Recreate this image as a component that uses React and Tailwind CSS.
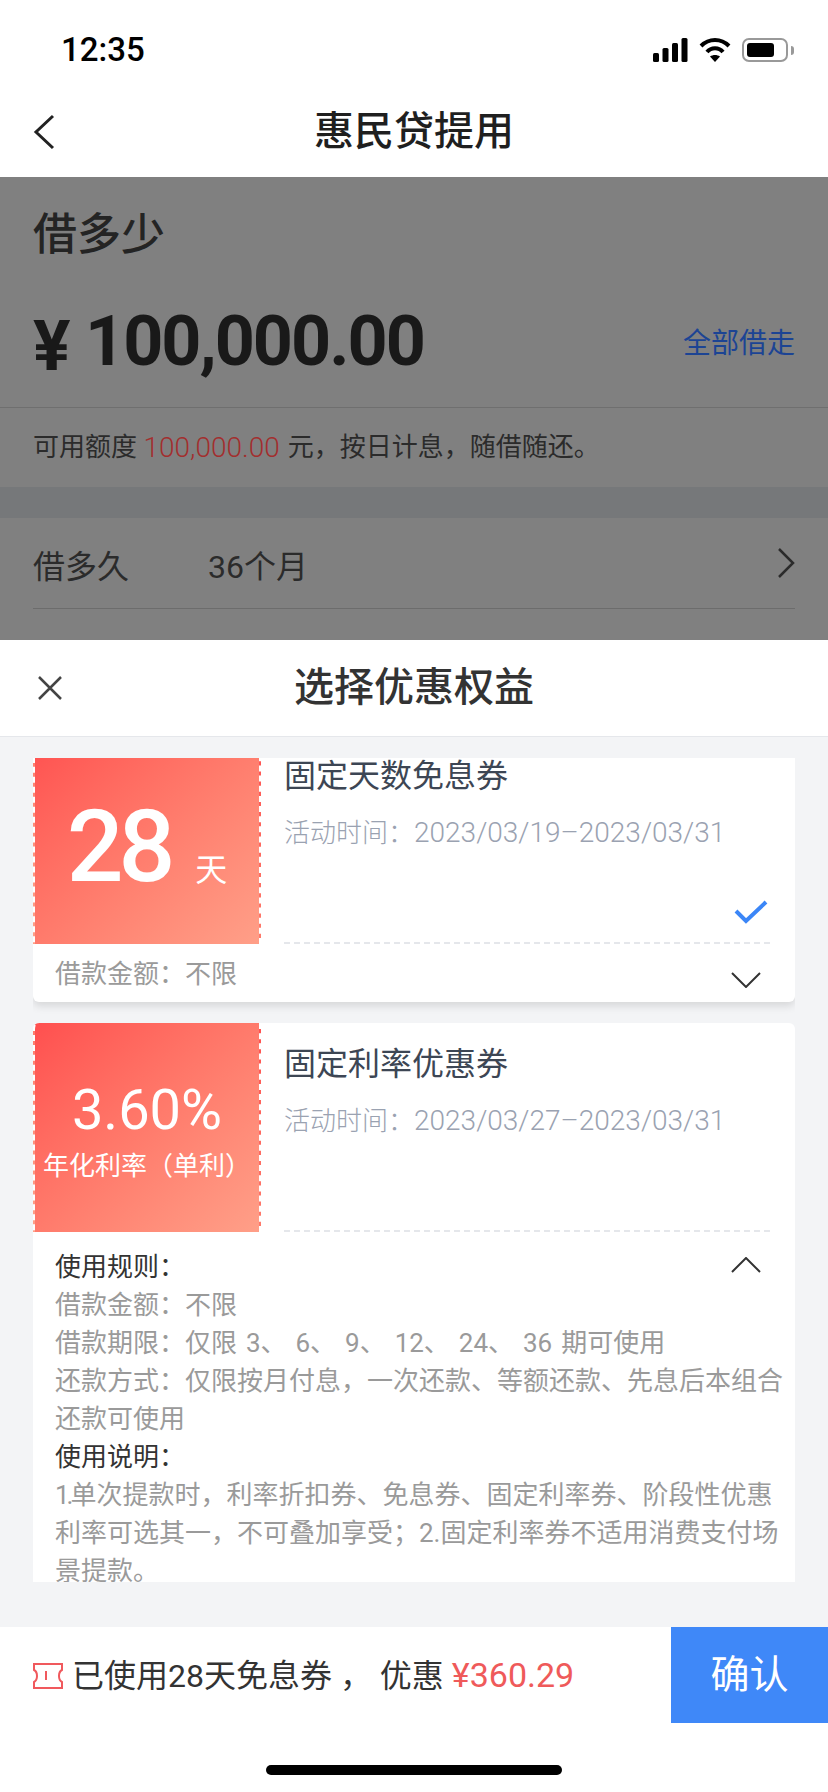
import React from "react";

const sans = "font-['Roboto','Noto_Sans_CJK_SC',sans-serif]";

const Chevron = ({ up, className }) => (
    <svg width="30" height="16" viewBox="0 0 30 16" fill="none" stroke="#333" strokeWidth="2" className={`mr-[22px] shrink-0 ${className}`}>
        <path d={up ? "M1 15 L15 1 L29 15" : "M1 1 L15 15 L29 1"} />
    </svg>
);

const Coupon = ({ title, date, ticket, checked, className, children }) => (
    <div className={`bg-white rounded-md ${className}`}>
        <div className="flex h-[209px]">
            <div className="w-[228px] shrink-0 bg-linear-to-br from-[#ff4f4f] to-[#ff9f88] border-x-2 border-dashed border-white rounded-tl-md text-white">
                {ticket}
            </div>
            <div className="flex-1 ml-[23px] mr-[25px] flex flex-col border-b-2 border-dashed border-[#e5e7eb]">
                <div className="pt-[21px] text-[32px] leading-[40px] text-[#3d4654]">{title}</div>
                <div className="mt-[18px] text-[26px] leading-[38px] text-[#9aa2b1] font-light">
                    活动时间：<span className="text-[28px]">{date}</span>
                </div>
                {checked && (
                    <svg width="34" height="24" viewBox="0 0 34 24" fill="none" stroke="#3b86f7" strokeWidth="4" className="mt-auto mb-[18px] self-end mr-[2px]">
                        <path d="M2 11 L12 21 L32 2" />
                    </svg>
                )}
            </div>
        </div>
        {children}
    </div>
);

const StatusIcons = () => (
    <div className="flex items-center gap-[11px]">
        <svg width="35" height="24" viewBox="0 0 35 24" fill="#000">
            <rect x="0" y="15" width="6" height="9" rx="1.5" />
            <rect x="9.5" y="10" width="6" height="14" rx="1.5" />
            <rect x="19" y="5" width="6" height="19" rx="1.5" />
            <rect x="28.5" y="0" width="6" height="24" rx="1.5" />
        </svg>
        <svg width="32" height="24" viewBox="0 0 32 24" fill="none" stroke="#000" strokeWidth="4">
            <path d="M2 8 C10 0 22 0 30 8" />
            <path d="M8 14 C12 9 20 9 24 14" />
            <path d="M16 24 L11 18.500 C14 16.500 18 16.500 21 18.500 Z" fill="#000" stroke="none" />
        </svg>
        <div className="flex items-center gap-[3px]">
            <div className="w-[46px] h-[24px] rounded-[7px] border-2 border-[#999] p-[3px]">
                <div className="w-[27px] h-full rounded-[3px] bg-black" />
            </div>
            <div className="w-[3px] h-[9px] rounded-r-full bg-[#999]" />
        </div>
    </div>
);

export default function App() {
    return (
        <div lang="zh-CN" className={`w-[828px] h-[1792px] flex flex-col bg-white overflow-hidden ${sans}`}>
            {/* status bar */}
            <div className="h-[88px] shrink-0 flex items-center justify-between pl-[61px] pr-[34px] pt-[26px] pb-[14px]">
                <span className="text-[33px] font-medium text-black">12:35</span>
                <StatusIcons />
            </div>

            {/* nav */}
            <div className="h-[89px] shrink-0 flex items-center relative">
                <svg width="22" height="36" viewBox="0 0 22 36" fill="none" stroke="#222" strokeWidth="3" className="ml-[33px] mb-[2px]">
                    <path d="M20 2 L3 18 L20 34" />
                </svg>
                <div className="flex-1 text-center text-[40px] font-medium text-[#1f1f1f] pr-[55px] mb-[2px]">惠民贷提用</div>
            </div>

            {/* dimmed page behind the sheet */}
            <div className="h-[463px] shrink-0 bg-[#808080] overflow-hidden">
                <div className="px-[33px] pt-[36px] h-[80px] text-[44px] leading-[44px] font-medium text-[#242424]">借多少</div>
                <div className="mt-[44px] h-[80px] px-[33px] flex items-center justify-between">
                    <div className="flex items-baseline font-bold text-[70px] leading-[80px] text-[#191919] tracking-[-2px]">
                        <span className="w-[52px] translate-y-[5px]">¥</span>
                        <span>100,000.00</span>
                    </div>
                    <span className="mt-[5px] text-[28px] text-[#1c4494]">全部借走</span>
                </div>
                <div className="mt-[26px] h-[80px] border-t border-[#6f6f6f] px-[33px] flex items-center text-[26px] text-[#2b2b2b]">
                    <span>可用额度&nbsp;</span>
                    <span className="text-[28px] text-[#a32e2e] font-light">100,000.00</span>
                    <span className="ml-[8px]">元，按日计息，随借随还。</span>
                </div>
                <div className="h-[31px] bg-[#76787a]" />
                <div className="mx-[33px] h-[91px] pt-[8px] border-b border-[#6c6c6c] flex items-center text-[32px] text-[#2b2b2b]">
                    <span className="w-[175px]">借多久</span>
                    <span className="flex-1">36个月</span>
                    <svg width="18" height="30" viewBox="0 0 18 30" fill="none" stroke="#2b2b2b" strokeWidth="2.500" className="-mt-[8px]">
                        <path d="M2 1 L16 15 L2 29" />
                    </svg>
                </div>
            </div>

            {/* sheet */}
            <div className="h-[97px] shrink-0 flex items-center relative border-b border-[#e5e7eb]">
                <svg width="26" height="26" viewBox="0 0 26 26" fill="none" stroke="#444" strokeWidth="2.500" className="ml-[37px]">
                    <path d="M2 2 L24 24 M24 2 L2 24" />
                </svg>
                <div className="flex-1 text-center text-[40px] font-medium text-[#333] pr-[63px]">选择优惠权益</div>
            </div>

            <div className="h-[890px] shrink-0 bg-[#f3f4f6] pt-[21px]">
                <div className="mx-[33px] h-[824px] overflow-hidden">
                    <Coupon
                        className="-mt-[23px] shadow-[0_4px_8px_rgba(0,0,0,0.12)]"
                        title="固定天数免息券"
                        date="2023/03/19–2023/03/31"
                        checked
                        ticket={
                            <div className="h-full flex items-baseline justify-center pt-[52px]">
                                <span className="text-[100px] leading-[120px] font-medium tracking-[-5px]">28</span>
                                <span className="ml-[25px] text-[32px]">天</span>
                            </div>
                        }
                    >
                        <div className="mt-[11px] pb-[9px] pl-[22px] pr-[12px] flex items-center justify-between text-[26px] leading-[38px] text-[#9a9a9a]">
                            <span>借款金额：不限</span>
                            <Chevron className="mt-[12px]" />
                        </div>
                    </Coupon>

                    <Coupon
                        className="mt-[21px]"
                        title="固定利率优惠券"
                        date="2023/03/27–2023/03/31"
                        ticket={
                            <div className="h-full flex flex-col items-center justify-center pt-[4px]">
                                <span className="text-[56px] leading-[66px]">3.60%</span>
                                <span className="mt-[6px] text-[26px] leading-[34px] whitespace-nowrap">年化利率（单利）</span>
                            </div>
                        }
                    >
                        <div className="mt-[16px] pl-[22px] pr-[12px] text-[26px] leading-[38px] text-[#9a9a9a]">
                            <div className="flex items-center justify-between text-[#333]">
                                <span>使用规则：</span>
                                <Chevron up className="-mt-[4px]" />
                            </div>
                            <div>借款金额：不限</div>
                            <div className="[word-spacing:2.5px]">借款期限：仅限 3、 6、 9、 12、 24、 36 期可使用</div>
                            <div>还款方式：仅限按月付息，一次还款、等额还款、先息后本组合还款可使用</div>
                            <div className="text-[#333]">使用说明：</div>
                            <div><span className="tracking-[-3px]">1.</span>单次提款时，利率折扣券、免息券、固定利率券、阶段性优惠利率可选其一，不可叠加享受；2.固定利率券不适用消费支付场景提款。</div>
                        </div>
                    </Coupon>
                </div>
            </div>

            {/* footer */}
            <div className="h-[96px] shrink-0 flex items-center">
                <svg width="32" height="28" viewBox="0 0 32 28" fill="none" stroke="#f0595d" strokeWidth="2" className="ml-[32px] mr-[8px] mt-[2px] shrink-0">
                    <path d="M2 2 H30 V8 C26 10 26 18 30 20 V26 H2 V20 C6 18 6 10 2 8 Z" />
                    <path d="M14 9 V18" />
                </svg>
                <div className="flex-1 text-[32px] text-[#333] whitespace-nowrap">
                    已使用28天免息券 ， 优惠 <span className="text-[34px] text-[#ef5a5a]">¥360.29</span>
                </div>
                <div className="w-[157px] h-full flex items-center justify-center bg-[#3f88f8] text-white text-[39px]">确认</div>
            </div>
            <div className="h-[68px] shrink-0 pt-[42px]">
                <div className="mx-auto w-[296px] h-[10px] rounded-full bg-black" />
            </div>
        </div>
    );
}
